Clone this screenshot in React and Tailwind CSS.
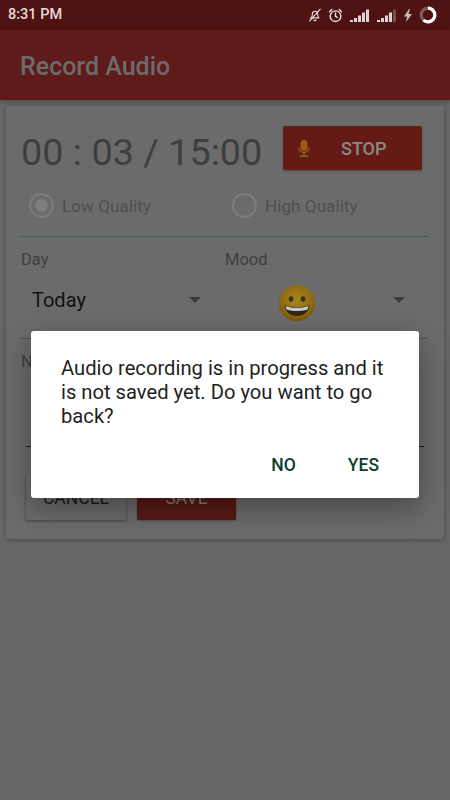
import React from 'react';

const roboto = { fontFamily: 'Roboto, sans-serif' };

const BellOff = () => (
  <svg width="14" height="16" viewBox="0 0 24 24" fill="none" stroke="#e8dcdc" strokeWidth="2" strokeLinecap="round" strokeLinejoin="round">
    <path d="M6 17c1-2 1.500-4 1.500-7a4.500 4.500 0 0 1 9 0c0 3 .5 5 2 7H4" />
    <path d="M10 20.500a2.200 2.200 0 0 0 4 0" />
    <path d="M3 22 21 2" />
  </svg>
);

const Alarm = () => (
  <svg width="15" height="15" viewBox="0 0 24 24" fill="none" stroke="#eee4e4" strokeWidth="2.200" strokeLinecap="round">
    <circle cx="12" cy="13" r="8.500" />
    <path d="M12 8v5.500l3 1.500" />
    <path d="M2.500 6 6 2.500M21.500 6 18 2.500" />
  </svg>
);

// signal bars, `dim` = how many of the top bars are faded
const Signal = ({ dim = 0 }) => (
  <svg width="19" height="13" viewBox="0 0 19 13">
    {[0, 1, 2, 3, 4].map((i) => {
      const h = [2, 4, 6.500, 9.500, 12.500][i];
      return (
        <rect
          key={i}
          x={i * 4}
          y={13 - h}
          width="3"
          height={h}
          fill="#e2d4d4"
          opacity={i >= 5 - dim ? 0.3 : 1}
        />
      );
    })}
  </svg>
);

const Bolt = () => (
  <svg width="8" height="13" viewBox="0 0 8 13">
    <path d="M5 0 0 7.500h3L2 13l6-8H4.500L6 0z" fill="#c9b8b8" />
  </svg>
);

const Battery = () => (
  <svg width="18" height="18" viewBox="0 0 18 18" fill="none">
    <circle cx="9" cy="9" r="6.800" stroke="#7d5a5a" strokeWidth="3.200" />
    <path d="M9 2.200A6.800 6.800 0 1 1 4.500 14.100" stroke="#ffffff" strokeWidth="3.200" />
  </svg>
);

const Mic = () => (
  <svg width="12" height="17" viewBox="0 0 12 17" fill="none">
    <rect x="2.500" y="0" width="7" height="11" rx="3.500" fill="#a3590f" />
    <path d="M.8 7.500c0 3 2.200 5 5.200 5s5.200-2 5.200-5" stroke="#8f6a2a" strokeWidth="1.200" />
    <path d="M6 12.500V15M1.500 16h9" stroke="#8f6a2a" strokeWidth="1.500" />
  </svg>
);

const Smiley = () => (
  <svg width="38" height="38" viewBox="0 0 38 38">
    <defs>
      <radialGradient id="face" cx="50%" cy="42%" r="58%">
        <stop offset="0%" stopColor="#a8851e" />
        <stop offset="75%" stopColor="#8f6a12" />
        <stop offset="100%" stopColor="#7a4f08" />
      </radialGradient>
    </defs>
    <circle cx="19" cy="19" r="18" fill="url(#face)" />
    <ellipse cx="13" cy="15" rx="2.300" ry="2.800" fill="#3d3014" />
    <ellipse cx="25" cy="15" rx="2.300" ry="2.800" fill="#3d3014" />
    <path d="M6.500 21c4 1.600 8 2.200 12.500 2.200S27.500 22.600 31.500 21c-.5 6.500-5.500 11-12.500 11S7 27.500 6.500 21z" fill="#33260e" />
    <path d="M7.500 22c3.800 1.300 7.500 1.800 11.500 1.800s7.700-.5 11.500-1.800c-.2 1.600-.7 2.800-1.300 3.800-3.200.9-6.500 1.300-10.200 1.300s-7-.4-10.200-1.300c-.6-1-1.100-2.200-1.300-3.800z" fill="#c9c9c9" />
  </svg>
);

const Caret = () => (
  <div className="w-0 h-0 border-l-[6px] border-r-[6px] border-t-[6px] border-l-transparent border-r-transparent border-t-[#3a3a3a]" />
);

const Radio = ({ label, checked, className }) => (
  <div className={`flex items-center ${className}`}>
    <div className="w-[25px] h-[25px] rounded-full border-[2.5px] border-[#7d7d7d] flex items-center justify-center shrink-0">
      {checked && <div className="w-[13px] h-[13px] rounded-full bg-[#7d7d7d]" />}
    </div>
    <span className="ml-[8px] text-[17.2px] text-[#4f4f4f] translate-y-px">{label}</span>
  </div>
);

export default function App() {
  return (
    <div className="relative w-[450px] h-[800px] overflow-hidden bg-[#666666] flex flex-col" style={roboto}>
      {/* status bar */}
      <div className="h-[30px] bg-[#4e1212] flex items-center pl-[8px] pr-[13px] shrink-0">
        <span className="text-[14.5px] font-medium text-[#e6d9d9]">8:31 PM</span>
        <div className="ml-auto flex items-center">
          <BellOff />
          <div className="ml-[6px]"><Alarm /></div>
          <div className="ml-[7px]"><Signal /></div>
          <div className="ml-[8px]"><Signal dim={1} /></div>
          <div className="ml-[8px]"><Bolt /></div>
          <div className="ml-[7px]"><Battery /></div>
        </div>
      </div>

      {/* app bar */}
      <div className="h-[70px] bg-[#5f1b19] flex items-center pl-[20px] pt-[3px] shrink-0 shadow-[0_2px_4px_rgba(0,0,0,0.25)]">
        <span className="text-[25px] font-medium text-[#6b6b6b]">Record Audio</span>
      </div>

      {/* card */}
      <div className="mx-[6px] mt-[6px] h-[433px] rounded-[3px] bg-[#6b6b6b] shadow-[0_1px_4px_rgba(0,0,0,0.3)] px-[15px] pt-[20px]">
        <div className="flex items-center h-[44px]">
          <span className="text-[37.8px] text-[#3e3e3e] whitespace-nowrap leading-none mt-[9px]">00 : 03 / 15:00</span>
          <div className="ml-auto mr-[7px] w-[139px] h-[44px] rounded-[2px] bg-[#651a16] shadow-[0_1px_2px_rgba(0,0,0,0.35)] flex items-center pl-[15px]">
            <Mic />
            <span className="ml-[31px] text-[18px] font-medium text-[#8a8a8a]">STOP</span>
          </div>
        </div>

        <div className="flex items-center mt-[23px] pl-[8px]">
          <Radio label="Low Quality" checked className="w-[203px]" />
          <Radio label="High Quality" />
        </div>

        <div className="h-px bg-[#3c5a50] mt-[17px] w-[407px]" />

        <div className="flex mt-[13px] text-[16.5px] text-[#3f3f3f] leading-[20px]">
          <span className="w-[204px]">Day</span>
          <span>Mood</span>
        </div>

        <div className="flex h-[50px] mt-[5px] w-[393px]">
          <div className="w-[204px] flex items-center pl-[11px] pr-[24px]">
            <span className="text-[20px] text-[#111111]">Today</span>
            <div className="ml-auto"><Caret /></div>
          </div>
          <div className="flex-1 flex items-center">
            <div className="ml-[53px] mt-[7px]"><Smiley /></div>
            <div className="ml-auto mr-[9px]"><Caret /></div>
          </div>
        </div>

        <div className="h-px bg-[#3c5a50] mt-[13px] w-[407px]" />

        <div className="mt-[13px] text-[16.5px] text-[#3f3f3f] leading-[20px]">Notes</div>

        <div className="h-[1.5px] bg-[#1a1a1a] mt-[74px] ml-[5px] w-[398px]" />

        <div className="flex mt-[28px] ml-[5px] gap-[11px]">
          <div className="w-[100px] h-[45px] rounded-[2px] bg-[#6b6b6b] shadow-[0_1px_3px_rgba(0,0,0,0.4)] flex items-center justify-center text-[17.5px] text-[#1c1c1c]">CANCEL</div>
          <div className="w-[99px] h-[45px] rounded-[2px] bg-[#581a14] shadow-[0_1px_2px_rgba(0,0,0,0.3)] flex items-center justify-center text-[17.5px] text-[#7d7d7d]">SAVE</div>
        </div>
      </div>

      {/* dialog */}
      <div className="absolute left-[31px] top-[331px] w-[388px] h-[167px] rounded-[3px] bg-white shadow-[0_10px_30px_rgba(0,0,0,0.35)] pl-[30px] pr-[20px] pt-[25px]">
        <p className="text-[20.2px] leading-[24px] text-[#1f1f1f]">Audio recording is in progress and it is not saved yet. Do you want to go back?</p>
        <div className="flex justify-end mt-[27px] pr-[20px] text-[17.5px] font-medium text-[#0b3d2e] leading-[20px]">
          <span>NO</span>
          <span className="ml-[52px]">YES</span>
        </div>
      </div>
    </div>
  );
}
